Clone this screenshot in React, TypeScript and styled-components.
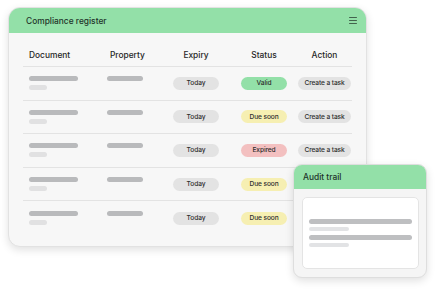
import React from "react";
import styled, { createGlobalStyle } from "styled-components";

const Global = createGlobalStyle`
  html, body { margin: 0; padding: 0; background: #ffffff; }
  body { font-family: "Inter", "Lato", "Liberation Sans", sans-serif; color: #2b2b2b; }
  * { box-sizing: border-box; }
`;

const Stage = styled.div`
  position: relative;
  width: 440px;
  height: 291px;
  padding: 7px 0 0 8px;
`;

const Card = styled.div`
  width: 359px;
  height: 240px;
  background: #f7f7f7;
  border: 1px solid #e2e2e2;
  border-radius: 12px;
  overflow: hidden;
  box-shadow: 0 3px 8px rgba(0, 0, 0, 0.12);
`;

const CardHeader = styled.div<{ $h: number }>`
  height: ${(p) => p.$h}px;
  background: #93e0a8;
  display: flex;
  align-items: center;
  justify-content: space-between;
  padding: 0 9px 0 17px;
  font-size: 8.4px;
  font-weight: 500;
  color: #22332a;
`;

const Burger = styled.div`
  display: flex;
  flex-direction: column;
  gap: 1.3px;
  width: 8px;
  & > span { display: block; height: 1.5px; border-radius: 1px; background: #42634d; }
`;

const Table = styled.div`
  margin: 10px 14px 0 14px;
`;

const Row = styled.div<{ $head?: boolean }>`
  display: grid;
  grid-template-columns: 78px 66px 68px 57px 53px;
  align-items: center;
  padding-left: 6px;
  height: ${(p) => (p.$head ? "24px" : "33.6px")};
  border-bottom: 1px solid #e3e3e3;
  &:last-child { border-bottom: none; }
`;

const HeadCell = styled.div<{ $w?: number; $pl?: number }>`
  font-size: 8.4px;
  font-weight: 500;
  color: #262626;
  width: ${(p) => (p.$w ? `${p.$w}px` : "auto")};
  text-align: ${(p) => (p.$w ? "center" : "left")};
  padding-left: ${(p) => p.$pl ?? 0}px;
  white-space: nowrap;
`;

const Stack = styled.div`
  display: flex;
  flex-direction: column;
  gap: 4px;
`;

const Bar = styled.div<{ $w: number; $light?: boolean; $ghost?: boolean }>`
  width: ${(p) => p.$w}px;
  height: 5px;
  border-radius: 3px;
  background: ${(p) => (p.$ghost ? "transparent" : p.$light ? "#e1e1e2" : "#b9babc")};
`;

const tones = {
  gray: "#e3e3e3",
  green: "#93e0a8",
  yellow: "#f6efb2",
  red: "#f3c0c0",
};

const Pill = styled.div<{ $tone: keyof typeof tones; $w: number }>`
  width: ${(p) => p.$w}px;
  height: 13px;
  border-radius: 7px;
  background: ${(p) => tones[p.$tone]};
  display: flex;
  align-items: center;
  justify-content: center;
  font-size: 6.6px;
  font-weight: 500;
  letter-spacing: -0.1px;
  color: #2e2e2e;
  white-space: nowrap;
`;

const Audit = styled.div`
  position: absolute;
  left: 293px;
  top: 164px;
  width: 134px;
  height: 114px;
  background: #f5f5f5;
  border: 1px solid #dedede;
  border-radius: 9px;
  overflow: hidden;
  box-shadow: 0 3px 8px rgba(0, 0, 0, 0.12);
  display: flex;
  flex-direction: column;
`;

const AuditHeader = styled(CardHeader)`
  padding-left: 9px;
`;

const AuditBody = styled.div`
  flex: 1;
  padding: 8px 7px 8px 8px;
  display: flex;
`;

const Sheet = styled.div`
  flex: 1;
  background: #ffffff;
  border: 1px solid #e4e4e4;
  border-radius: 5px;
  display: flex;
  flex-direction: column;
  justify-content: center;
  padding: 0 6px;
  gap: 3.5px;
`;

const LogBar = styled.div<{ $light?: boolean }>`
  height: ${(p) => (p.$light ? 4 : 5)}px;
  width: ${(p) => (p.$light ? "40px" : "100%")};
  border-radius: 3px;
  background: ${(p) => (p.$light ? "#e2e3e5" : "#bebfc1")};
`;

const rows: { status: string; tone: keyof typeof tones; action: boolean }[] = [
  { status: "Valid", tone: "green", action: true },
  { status: "Due soon", tone: "yellow", action: true },
  { status: "Expired", tone: "red", action: true },
  { status: "Due soon", tone: "yellow", action: false },
  { status: "Due soon", tone: "yellow", action: false },
];

export default function App() {
  return (
    <>
      <Global />
      <Stage>
        <Card>
          <CardHeader $h={25}>
            <span>Compliance register</span>
            <Burger>
              <span />
              <span />
              <span />
            </Burger>
          </CardHeader>
          <Table>
            <Row $head>
              <HeadCell>Document</HeadCell>
              <HeadCell $pl={3}>Property</HeadCell>
              <HeadCell $w={46}>Expiry</HeadCell>
              <HeadCell $w={46}>Status</HeadCell>
              <HeadCell $w={53}>Action</HeadCell>
            </Row>
            {rows.map((r, i) => (
              <Row key={i}>
                <Stack>
                  <Bar $w={49} />
                  <Bar $w={18} $light />
                </Stack>
                <Stack>
                  <Bar $w={36} />
                  <Bar $w={36} $ghost />
                </Stack>
                <Pill $tone="gray" $w={46}>Today</Pill>
                <Pill $tone={r.tone} $w={46}>{r.status}</Pill>
                {r.action ? <Pill $tone="gray" $w={53}>Create a task</Pill> : <span />}
              </Row>
            ))}
          </Table>
        </Card>
        <Audit>
          <AuditHeader $h={24}>
            <span>Audit trail</span>
          </AuditHeader>
          <AuditBody>
            <Sheet>
              <LogBar />
              <LogBar $light />
              <LogBar />
              <LogBar $light />
            </Sheet>
          </AuditBody>
        </Audit>
      </Stage>
    </>
  );
}
